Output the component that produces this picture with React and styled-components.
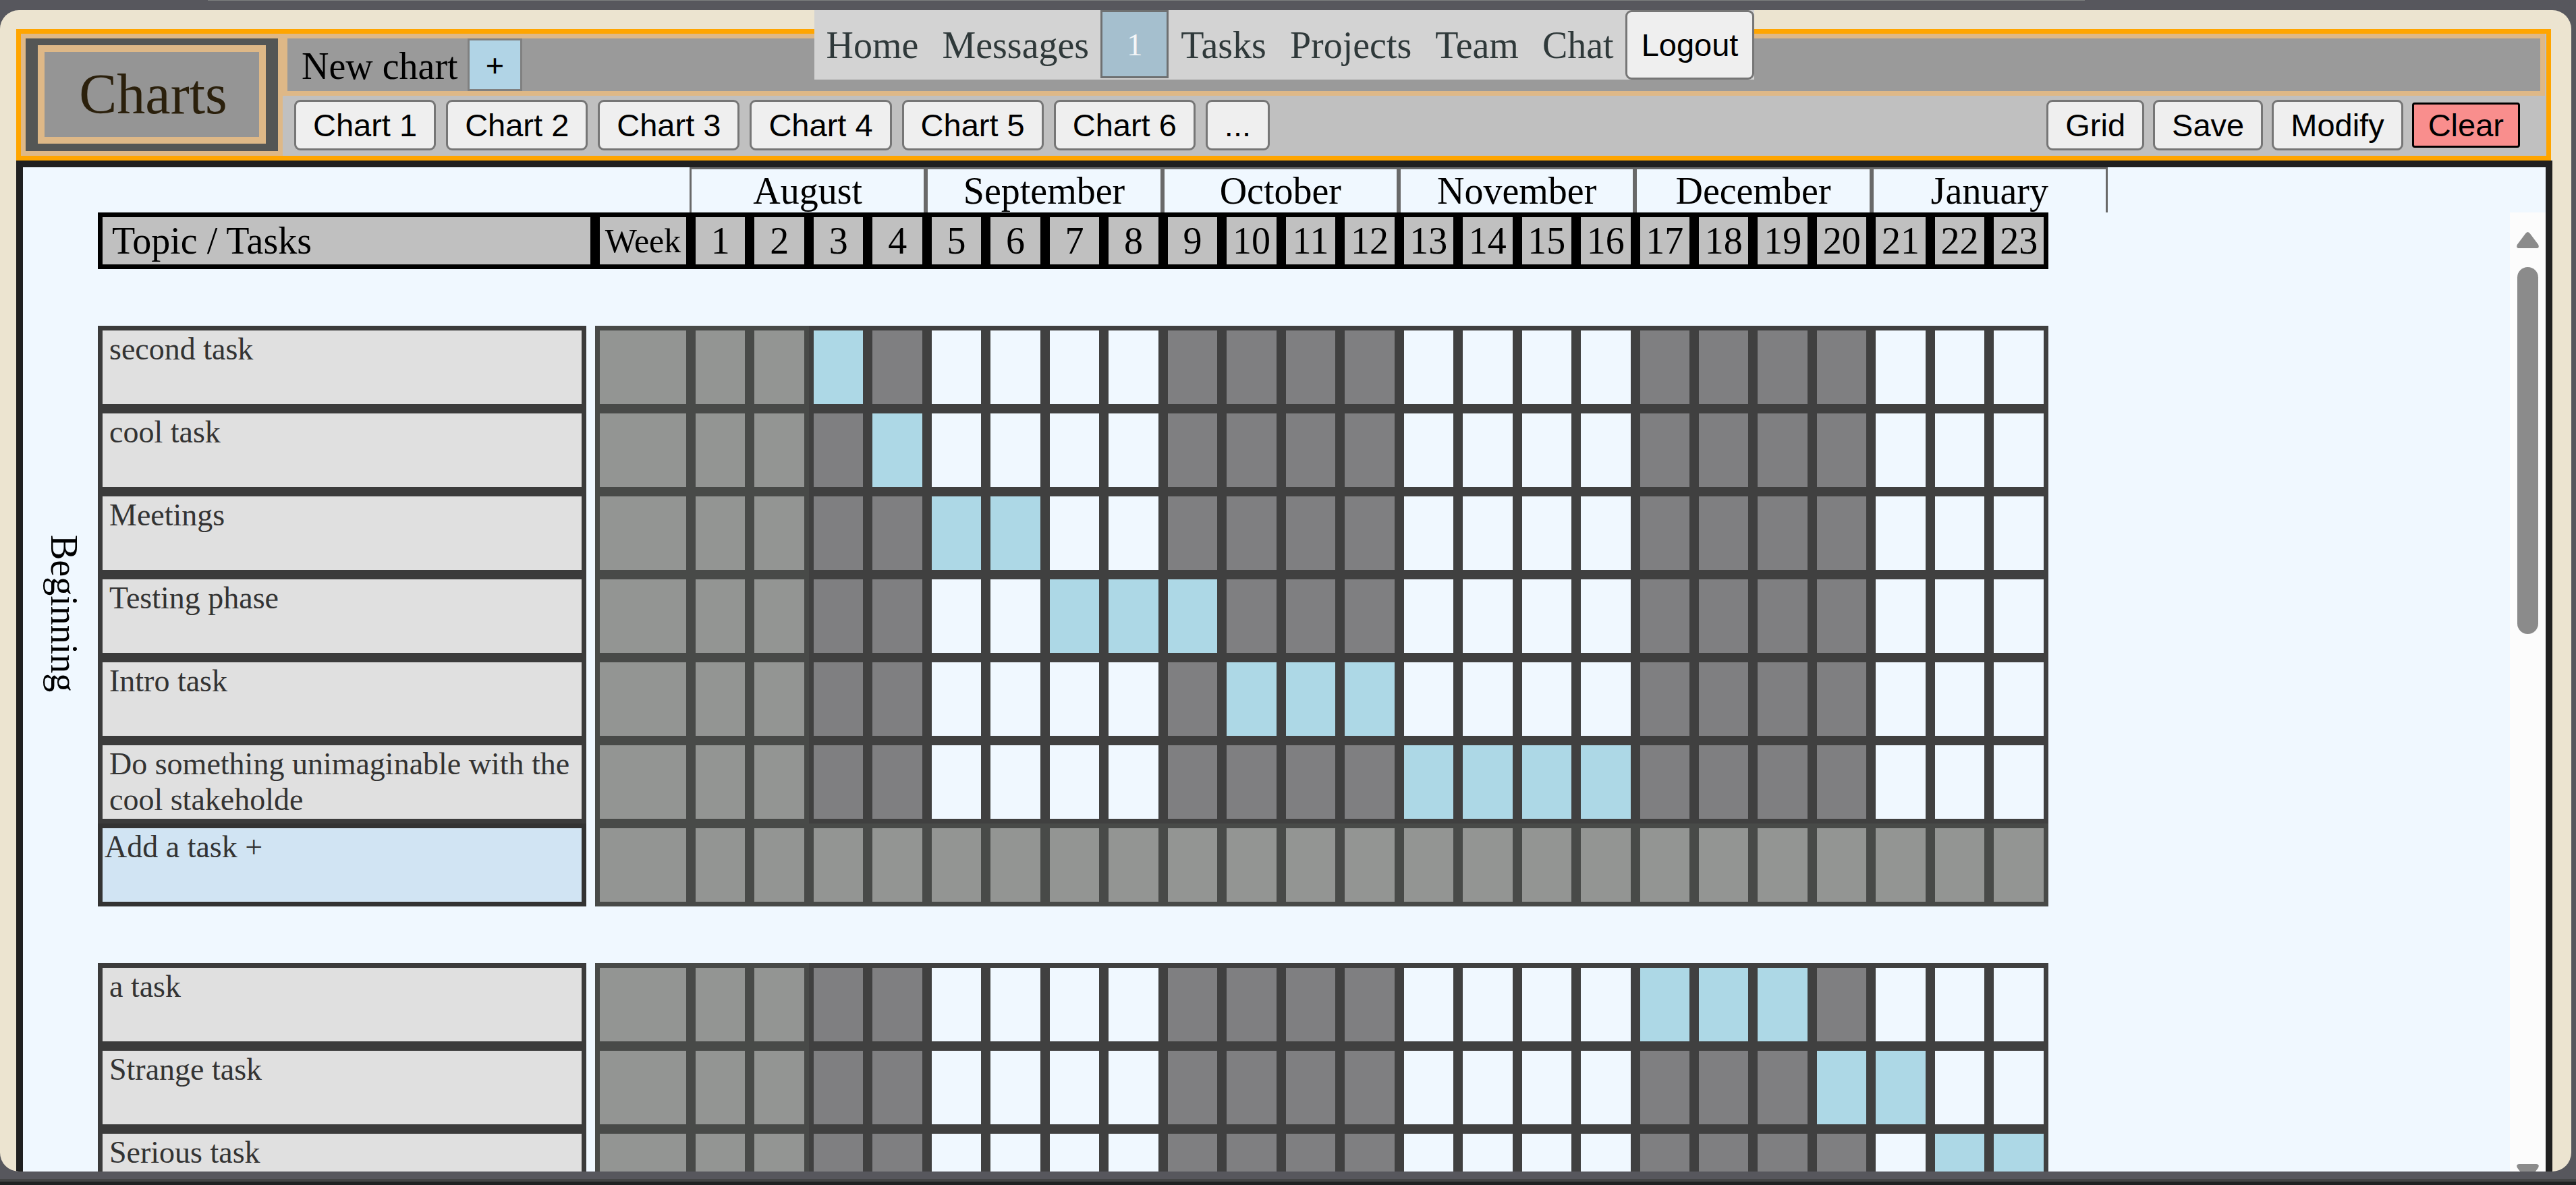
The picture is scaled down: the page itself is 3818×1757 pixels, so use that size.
import React from "react";
import styled, { createGlobalStyle } from "styled-components";

const SERIF = '"Liberation Serif", "Times New Roman", serif';
const SANS = '"Liberation Sans", Arial, sans-serif';

const GlobalStyle = createGlobalStyle`
  *, *::before, *::after { box-sizing: border-box; }
  body { margin: 0; background: #57575d; font-family: ${SERIF}; color: #000; }
`;

const Page = styled.div`
  display: flex;
  flex-direction: column;
  height: 100vh;
  overflow: hidden;
`;

const TopEdge = styled.div`
  height: 1px;
  margin: 0 728px 14px 308px;
  background: #7d807f;
`;

const Card = styled.div`
  position: relative;
  flex: 1;
  min-height: 0;
  display: flex;
  flex-direction: column;
  margin-right: 7px;
  padding: 28px 28px 0 24px;
  border-radius: 28px;
  overflow: hidden;
  background: #ece4d0;
`;

const BottomEdge = styled.div`
  height: 9px;
  margin-top: 11px;
  border-top: 4px solid #444545;
  background: #202222;
`;

const NavLayer = styled.div`
  position: absolute;
  top: 0;
  left: 0;
  right: 4px;
  display: flex;
  justify-content: center;
  pointer-events: none;
`;

const Nav = styled.nav`
  display: flex;
  align-items: center;
  height: 103px;
  background: #d3d3d3;
  pointer-events: auto;
`;

const NavLink = styled.a`
  padding: 0 17px 0 18px;
  font-size: 56px;
  line-height: 64px;
  color: #2f393a;
  text-decoration: none;
`;

const Badge = styled.span`
  display: flex;
  align-items: center;
  justify-content: center;
  align-self: flex-start;
  width: 101px;
  height: 101px;
  border: 3px solid #6e7071;
  background: #a5bfce;
  color: #f3f6f8;
  font-size: 47px;
  line-height: 54px;
`;

const Button = styled.button`
  margin: 0;
  padding: 8px 25px;
  border: 3px solid #767676;
  border-radius: 9px;
  background: #efefef;
  color: #000;
  font-family: ${SANS};
  font-size: 47px;
  line-height: 53px;
`;

const LogoutButton = styled(Button)`
  align-self: stretch;
  padding: 0 21px;
`;

const ClearButton = styled(Button)`
  padding: 4px 21px;
  border-color: #000;
  border-radius: 4px;
  background: #f98e8d;
`;

const AddChartButton = styled(Button)`
  align-self: stretch;
  padding: 0 24px;
  border-color: #808080;
  border-radius: 0;
  background: #b1d4e6;
`;

const Header = styled.header`
  display: flex;
  flex: none;
  margin-right: 2px;
  border: 7px solid orange;
  background: #c0c0c0;
`;

const TitleFrame = styled.div`
  border: 7px solid burlywood;
  padding: 10px 18px 11px;
  background: #545655;
`;

const Title = styled.h1`
  display: flex;
  align-items: center;
  justify-content: center;
  width: 338px;
  height: 146px;
  margin: 0;
  padding-left: 4px;
  border: 10px solid burlywood;
  background: #959595;
  color: #2b200c;
  font-size: 84px;
  font-weight: 400;
  line-height: 96px;
`;

const HeaderTools = styled.div`
  flex: 1;
  min-width: 0;
  display: flex;
  flex-direction: column;
`;

const NewChart = styled.div`
  display: flex;
  align-items: center;
  gap: 14px;
  height: 92px;
  margin-right: 2px;
  padding-left: 21px;
  border: 7px solid burlywood;
  background: #9a9a9a;
`;

const NewChartLabel = styled.label`
  padding-top: 4px;
  font-size: 56px;
  line-height: 64px;
`;

const Toolbar = styled.div`
  display: flex;
  justify-content: space-between;
  padding: 6px 39px 8px 17px;
`;

const ButtonGroup = styled.div`
  display: flex;
  align-items: center;
  gap: ${(p) => p.$gap}px;
`;

const Board = styled.main`
  flex: 1;
  min-height: 0;
  display: flex;
  flex-direction: column;
  border: 10px solid #202020;
  border-bottom: 0;
  background: aliceblue;
`;

const Months = styled.div`
  display: grid;
  grid-template-columns: repeat(6, 1fr);
  flex: none;
  width: 2102px;
  height: 67px;
  margin-left: 988px;
`;

const Month = styled.div`
  border: 3px solid #696969;
  border-bottom: 0;
  font-size: 56px;
  line-height: 64px;
  text-align: center;
`;

const Scroller = styled.div`
  flex: 1;
  min-height: 0;
  display: flex;
  justify-content: space-between;
`;

const TableArea = styled.div`
  flex: 1;
  min-width: 0;
  overflow: hidden;
`;

const Chart = styled.table`
  width: 3002px;
  table-layout: fixed;
  border-collapse: separate;
  border-spacing: 0;

  th, td { padding: 0; font-weight: 400; }
`;

const Col = styled.col`
  width: ${(p) => p.$width}px;
`;

const HeadCell = styled.th`
  height: 84px;
  border: 7px solid #000;
  background: #c0c0c0;
  font-size: ${(p) => (p.$small ? 50 : 56)}px;
  line-height: 64px;
  text-align: center;
`;

const TopicCell = styled(HeadCell)`
  && { padding-left: 14px; }
  text-align: left;
`;

const SpacerCell = styled.td`
  height: 84px;
`;

const GroupLabel = styled.th`
  && { padding: 0 0 8px 10px; }
  vertical-align: middle;

  span {
    display: block;
    margin: 0 auto;
    writing-mode: vertical-rl;
    width: 64px;
    font-size: 56px;
    line-height: 64px;
  }
`;

const TaskCell = styled.th`
  height: 123px;
  text-align: left;
  vertical-align: top;
`;

const TaskName = styled.div`
  width: 724px;
  height: 123px;
  padding: 1px 10px;
  border: 7px solid #3b3b3b;
  background: #e0e0e0;
  color: #333;
  font-size: 46px;
  line-height: 53px;
`;

const AddTask = styled.button`
  display: flex;
  align-items: flex-start;
  width: 724px;
  height: 123px;
  margin: 0;
  padding: 1px 3px;
  border: 7px solid #333;
  background: #d1e4f3;
  color: #333;
  font-family: ${SERIF};
  font-size: 46px;
  line-height: 53px;
`;

const cellFill = {
  past: "#939593",
  shaded: "#7f7f81",
  open: "aliceblue",
  busy: "#add8e6",
};

const WeekCell = styled.td`
  height: 123px;
  border: 7px solid ${(p) => (p.$kind === "past" ? "#484a48" : "#404040")};
  background: ${(p) => cellFill[p.$kind]};
`;

const Scrollbar = styled.div`
  flex: none;
  display: flex;
  flex-direction: column;
  align-items: center;
  width: 53px;
  padding-top: 29px;
  overflow: hidden;
  background: #fcfcfc;
`;

const ScrollArrow = styled.svg`
  display: block;
  flex: none;
  width: 33px;
  height: 24px;
  fill: #8b8b8b;
`;

const ScrollThumb = styled.div`
  flex: none;
  width: 31px;
  height: 544px;
  margin: 28px 0 auto;
  border-radius: 16px;
  background: #8b8b8b;
`;

const ScrollEnd = styled.div`
  flex: none;
  height: 11px;
`;

const MONTHS = ["August", "September", "October", "November", "December", "January"];
const WEEKS = Array.from({ length: 23 }, (_, i) => i + 1);
const CHARTS = ["Chart 1", "Chart 2", "Chart 3", "Chart 4", "Chart 5", "Chart 6", "..."];

const GROUPS = [
  {
    name: "Beginning",
    canAdd: true,
    tasks: [
      { name: "second task", from: 3, to: 3 },
      { name: "cool task", from: 4, to: 4 },
      { name: "Meetings", from: 5, to: 6 },
      { name: "Testing phase", from: 7, to: 9 },
      { name: "Intro task", from: 10, to: 12 },
      { name: "Do something unimaginable with the cool stakeholde", from: 13, to: 16 },
    ],
  },
  {
    name: "",
    canAdd: false,
    tasks: [
      { name: "a task", from: 17, to: 19 },
      { name: "Strange task", from: 20, to: 21 },
      { name: "Serious task", from: 22, to: 23 },
    ],
  },
];

function weekKind(week, task) {
  if (week >= task.from && week <= task.to) return "busy";
  if (week <= 2) return "past";
  return Math.floor((week - 1) / 4) % 2 === 0 ? "shaded" : "open";
}

function Group({ group }) {
  const rows = group.tasks.length + (group.canAdd ? 1 : 0);
  return (
    <tbody>
      <tr>
        <SpacerCell colSpan={26} />
      </tr>
      {group.tasks.map((task, i) => (
        <tr key={task.name}>
          {i === 0 && (
            <GroupLabel scope="rowgroup" rowSpan={rows}>
              {group.name && <span>{group.name}</span>}
            </GroupLabel>
          )}
          <TaskCell scope="row">
            <TaskName>{task.name}</TaskName>
          </TaskCell>
          <WeekCell $kind="past" />
          {WEEKS.map((w) => (
            <WeekCell key={w} $kind={weekKind(w, task)} />
          ))}
        </tr>
      ))}
      {group.canAdd && (
        <tr>
          <TaskCell scope="row">
            <AddTask type="button">Add a task +</AddTask>
          </TaskCell>
          <WeekCell $kind="past" />
          {WEEKS.map((w) => (
            <WeekCell key={w} $kind="past" />
          ))}
        </tr>
      )}
    </tbody>
  );
}

export default function App() {
  return (
    <Page>
      <GlobalStyle />
      <TopEdge />
      <Card>
        <Header>
          <TitleFrame>
            <Title>Charts</Title>
          </TitleFrame>
          <HeaderTools>
            <NewChart>
              <NewChartLabel htmlFor="new-chart">New chart</NewChartLabel>
              <AddChartButton id="new-chart" type="button">+</AddChartButton>
            </NewChart>
            <Toolbar>
              <ButtonGroup $gap={15}>
                {CHARTS.map((c) => (
                  <Button key={c} type="button">{c}</Button>
                ))}
              </ButtonGroup>
              <ButtonGroup $gap={13}>
                <Button type="button">Grid</Button>
                <Button type="button">Save</Button>
                <Button type="button">Modify</Button>
                <ClearButton type="button">Clear</ClearButton>
              </ButtonGroup>
            </Toolbar>
          </HeaderTools>
        </Header>

        <Board>
          <Months>
            {MONTHS.map((m) => (
              <Month key={m}>{m}</Month>
            ))}
          </Months>
          <Scroller>
            <TableArea>
              <Chart>
                <colgroup>
                  <Col $width={111} />
                  <Col $width={737} />
                  <Col $width={142} />
                  {WEEKS.map((w) => (
                    <col key={w} />
                  ))}
                </colgroup>
                <thead>
                  <tr>
                    <td />
                    <TopicCell scope="col">Topic / Tasks</TopicCell>
                    <HeadCell scope="col" $small>Week</HeadCell>
                    {WEEKS.map((w) => (
                      <HeadCell key={w} scope="col">{w}</HeadCell>
                    ))}
                  </tr>
                </thead>
                {GROUPS.map((g, i) => (
                  <Group key={i} group={g} />
                ))}
              </Chart>
            </TableArea>
            <Scrollbar aria-hidden="true">
              <ScrollArrow viewBox="0 0 33 24">
                <path d="M13 2.5Q16.500 -2.500 20 2.500L32 18.500Q34.500 24 29 24H4Q-1.500 24 1 18.500Z" />
              </ScrollArrow>
              <ScrollThumb />
              <ScrollEnd>
                <ScrollArrow viewBox="0 0 33 24">
                  <path d="M13 21.500Q16.500 26.500 20 21.500L32 5.500Q34.500 0 29 0H4Q-1.500 0 1 5.500Z" />
                </ScrollArrow>
              </ScrollEnd>
            </Scrollbar>
          </Scroller>
        </Board>

        <NavLayer>
          <Nav>
            <NavLink href="#home">Home</NavLink>
            <NavLink href="#messages">Messages</NavLink>
            <Badge>1</Badge>
            <NavLink href="#tasks">Tasks</NavLink>
            <NavLink href="#projects">Projects</NavLink>
            <NavLink href="#team">Team</NavLink>
            <NavLink href="#chat">Chat</NavLink>
            <LogoutButton type="button">Logout</LogoutButton>
          </Nav>
        </NavLayer>
      </Card>
      <BottomEdge />
    </Page>
  );
}
